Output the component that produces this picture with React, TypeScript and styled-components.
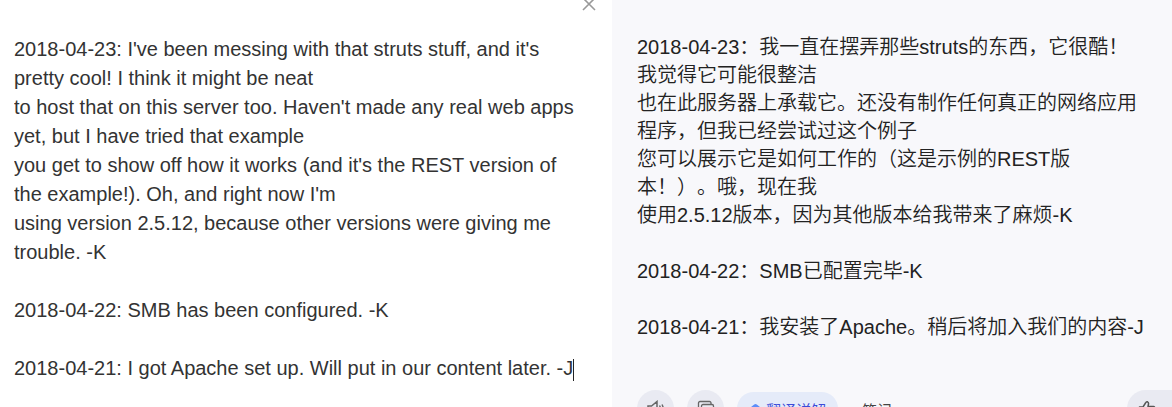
import React from "react";
import styled, { createGlobalStyle } from "styled-components";

const GlobalStyle = createGlobalStyle`
  * { box-sizing: border-box; }
  body {
    margin: 0;
    background: #ffffff;
    font-family: "Liberation Sans", "Noto Sans CJK SC", sans-serif;
  }
`;

const Page = styled.main`
  display: grid;
  grid-template-columns: 153fr 140fr;
  height: 100vh;
  overflow: hidden;
`;

const SourcePanel = styled.section`
  position: relative;
  padding: 35px 24px 0 14px;
  background: #ffffff;
`;

const SourceText = styled.textarea`
  display: block;
  width: 100%;
  padding: 0;
  border: 0;
  outline: 0;
  resize: none;
  overflow: hidden;
  background: transparent;
  color: #333333;
  font: 20px/29px "Liberation Sans", sans-serif;
  white-space: pre;
`;

const Caret = styled.span`
  position: absolute;
  left: 573px;
  top: 359px;
  width: 1px;
  height: 22px;
  background: #222222;
`;

const CloseButton = styled.button`
  position: absolute;
  top: -4px;
  right: 15px;
  display: flex;
  padding: 0;
  border: 0;
  background: transparent;
  color: #999999;
`;

const ResultPanel = styled.section`
  display: flex;
  flex-direction: column;
  gap: 49px;
  padding: 33px 0 0 25px;
  background: #f8f8fb;
`;

const ResultText = styled.p`
  margin: 0;
  color: #222222;
  font-size: 20px;
  font-weight: 350;
  line-height: 28px;
  white-space: pre;
  text-spacing-trim: space-all;
`;

const Toolbar = styled.div`
  display: flex;
  align-items: center;
  gap: 13px;
`;

const RoundButton = styled.button`
  display: flex;
  align-items: center;
  justify-content: center;
  width: 37px;
  height: 37px;
  padding: 0;
  border: 0;
  border-radius: 50%;
  background: #e9eaf2;
  color: #666666;
`;

const PillButton = styled.button`
  display: flex;
  align-items: center;
  gap: 4px;
  height: 33px;
  padding: 2px 12px 0;
  border: 0;
  border-radius: 17px;
  background: #e5ebf9;
  color: #3d4bd8;
  font: 15px/20px "Noto Sans CJK SC", sans-serif;
`;

const NoteButton = styled.button`
  padding: 2px 11px 0;
  border: 0;
  background: transparent;
  color: #444444;
  font: 15px/20px "Noto Sans CJK SC", sans-serif;
`;

const FeedbackGroup = styled.div`
  display: flex;
  align-items: center;
  width: 45px;
  height: 37px;
  margin-left: auto;
  padding-left: 11px;
  border-radius: 19px 0 0 19px;
  background: #e9eaf2;
`;

const FeedbackButton = styled.button`
  display: flex;
  padding: 0;
  border: 0;
  background: transparent;
  color: #555555;
`;

const source = `2018-04-23: I've been messing with that struts stuff, and it's
pretty cool! I think it might be neat
to host that on this server too. Haven't made any real web apps
yet, but I have tried that example
you get to show off how it works (and it's the REST version of
the example!). Oh, and right now I'm
using version 2.5.12, because other versions were giving me
trouble. -K

2018-04-22: SMB has been configured. -K

2018-04-21: I got Apache set up. Will put in our content later. -J`;

const translation = `2018-04-23：我一直在摆弄那些struts的东西，它很酷！
我觉得它可能很整洁
也在此服务器上承载它。还没有制作任何真正的网络应用
程序，但我已经尝试过这个例子
您可以展示它是如何工作的（这是示例的REST版
本！）。哦，现在我
使用2.5.12版本，因为其他版本给我带来了麻烦-K

2018-04-22：SMB已配置完毕-K

2018-04-21：我安装了Apache。稍后将加入我们的内容-J`;

const CloseIcon = () => (
  <svg width="16" height="16" viewBox="0 0 16 16" fill="none" stroke="currentColor" strokeWidth="1.6">
    <path d="M2 2l12 12M14 2L2 14" />
  </svg>
);

const SpeakerIcon = () => (
  <svg width="18" height="18" viewBox="0 0 18 18" fill="none" stroke="currentColor" strokeWidth="1.5">
    <path d="M1 6h3.500L10 1.500v15L4.500 12H1z" />
    <path d="M12.500 5.500q2 3.500 0 7M15 4.500q2.500 4.500 0 9" />
  </svg>
);

const CopyIcon = () => (
  <svg width="18" height="18" viewBox="0 0 18 18" fill="none" stroke="currentColor" strokeWidth="1.3">
    <path d="M4.500 13H3a1.500 1.500 0 0 1-1.500-1.500V3A1.500 1.500 0 0 1 3 1.500h9.500A1.500 1.500 0 0 1 14 3v1.500" />
    <rect x="4.500" y="4.500" width="12" height="12" rx="1.500" />
  </svg>
);

const GemIcon = () => (
  <svg width="13" height="13" viewBox="0 0 13 13">
    <path d="M5.200 1.500q1.300-1 2.600 0l4 3.200q1 .9.200 2L7.500 12q-1 1-2 0L1 6.700q-.8-1.100.2-2z" fill="#5c8df8" />
  </svg>
);

const ThumbIcon = () => (
  <svg width="18" height="18" viewBox="0 0 18 18" fill="none" stroke="currentColor" strokeWidth="1.5" strokeLinejoin="round">
    <path d="M5 7l2.500-4Q8.300 1.300 9.500 1.800q1.300.7 1 2.200L10 6.500h5.500q1.500.2 1.200 1.800l-1.200 6q-.3 1.700-2 1.700H5zM5 7H1.500v9H5" />
  </svg>
);

export default function App() {
  return (
    <>
      <GlobalStyle />
      <Page>
        <SourcePanel>
          <SourceText aria-label="Source text" rows={12} spellCheck={false} defaultValue={source} />
          <Caret aria-hidden="true" />
          <CloseButton type="button" aria-label="Clear">
            <CloseIcon />
          </CloseButton>
        </SourcePanel>
        <ResultPanel>
          <ResultText lang="zh-CN">{translation}</ResultText>
          <Toolbar>
            <RoundButton type="button" aria-label="Listen">
              <SpeakerIcon />
            </RoundButton>
            <RoundButton type="button" aria-label="Copy">
              <CopyIcon />
            </RoundButton>
            <PillButton type="button">
              <GemIcon />
              翻译详解
            </PillButton>
            <NoteButton type="button">笔记</NoteButton>
            <FeedbackGroup>
              <FeedbackButton type="button" aria-label="Like">
                <ThumbIcon />
              </FeedbackButton>
            </FeedbackGroup>
          </Toolbar>
        </ResultPanel>
      </Page>
    </>
  );
}
